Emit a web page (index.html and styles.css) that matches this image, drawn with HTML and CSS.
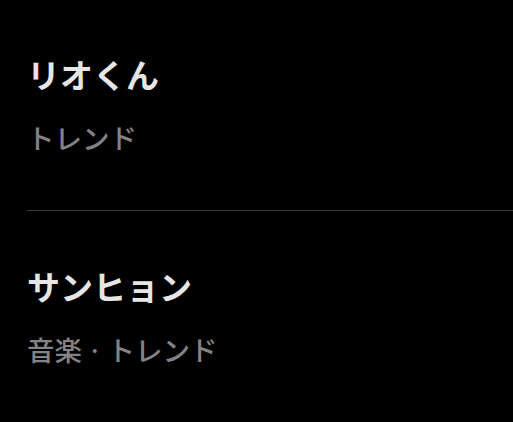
FILE: index.html
```html
<!DOCTYPE html>
<html lang="ja">
<head>
  <meta charset="UTF-8">
  <meta name="viewport" content="width=device-width, initial-scale=1.0">
  <title>リスト</title>
  <link rel="stylesheet" href="styles.css">
</head>
<body>
  <ul class="list">
    <li class="item">
      <div class="item-title">リオくん</div>
      <div class="item-sub">トレンド</div>
    </li>
    <li class="item">
      <div class="item-title">サンヒョン</div>
      <div class="item-sub">音楽<span class="dot">·</span>トレンド</div>
    </li>
  </ul>
</body>
</html>
```

FILE: styles.css
```css
body {
  margin: 0;
  background: #000;
  font-family: "Noto Sans CJK JP", "Noto Sans", sans-serif;
}
.list {
  list-style: none;
  margin: 0;
  padding: 0;
}
.item {
  margin-left: 27px;
  padding: 54px 0 55px;
}
.item + .item {
  border-top: 1px solid #3a3a3c;
  padding-top: 55px;
}
.item-title {
  font-size: 33px;
  line-height: 40px;
  font-weight: 700;
  color: #e6e6e6;
}
.item-sub {
  margin-top: 25px;
  font-size: 27.5px;
  line-height: 36px;
  font-weight: 500;
  color: #838387;
}
/* separator between categories */
.dot {
  font-family: "Noto Sans", sans-serif;
  margin: 0 9px;
}
```
